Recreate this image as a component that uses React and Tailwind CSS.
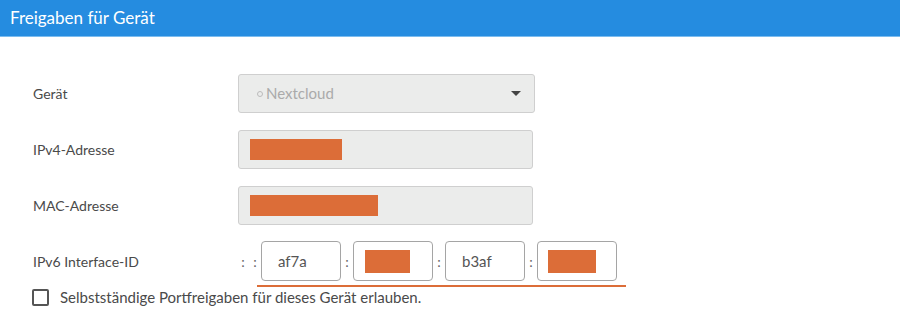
import React from "react";

const font = { fontFamily: "Lato, 'Open Sans', sans-serif" };

const Label = ({ children }) => (
  <div className="w-[238px] shrink-0 pl-[33px] text-[14px] text-[#4a4a4a]">{children}</div>
);

const Redacted = ({ w }) => <div className={`bg-[#dc6d38] h-[21px] ${w}`} />;

const Sep = () => <span className="text-[14px] text-[#666] w-[12px] text-center">:</span>;

const V6Box = ({ children, pad = "pl-[16px]" }) => (
  <div className={`w-[80px] h-[40px] border border-[#a5a5a5] rounded-[4px] bg-white flex items-center ${pad} text-[15px] text-[#555]`}>
    {children}
  </div>
);

export default function App() {
  return (
    <div className="w-[900px] h-[323px] bg-white overflow-hidden" style={font}>
      <div className="h-[37px] bg-[#258ce0] border-b border-[#7bbcef] flex items-center pl-[10px]">
        <h1 className="text-white text-[17px]">Freigaben für Gerät</h1>
      </div>

      <div className="pt-[37px] flex flex-col gap-[17px]">
        <div className="flex items-center">
          <Label>Gerät</Label>
          <div className="w-[297px] h-[39px] bg-[#ebeceb] border border-[#cfcfcf] rounded-[3px] flex items-center justify-between pl-[18px] pr-[13px]">
            <span className="flex items-center gap-[3px] text-[15px] text-[#aaa]">
              <span className="w-[6px] h-[6px] rounded-full border border-[#bbb]" />
              Nextcloud
            </span>
            <span className="w-0 h-0 border-l-[5px] border-r-[5px] border-t-[5px] border-l-transparent border-r-transparent border-t-[#444]" />
          </div>
        </div>

        <div className="flex items-center">
          <Label>IPv4-Adresse</Label>
          <div className="w-[295px] h-[39px] bg-[#ebeceb] border border-[#cfcfcf] rounded-[3px] flex items-center pl-[11px]">
            <Redacted w="w-[92px]" />
          </div>
        </div>

        <div className="flex items-center">
          <Label>MAC-Adresse</Label>
          <div className="w-[295px] h-[39px] bg-[#ebeceb] border border-[#cfcfcf] rounded-[3px] flex items-center pl-[11px]">
            <Redacted w="w-[128px]" />
          </div>
        </div>

        <div className="flex items-center -mt-[1px]">
          <Label>IPv6 Interface-ID</Label>
          <div className="flex items-center -ml-[1px]">
            <Sep />
            <Sep />
            <V6Box>af7a</V6Box>
            <Sep />
            <V6Box pad="pl-[11px]">
              <Redacted w="w-[45px] h-[23px]" />
            </V6Box>
            <Sep />
            <V6Box>b3af</V6Box>
            <Sep />
            <V6Box pad="pl-[10px]">
              <Redacted w="w-[48px] h-[23px]" />
            </V6Box>
          </div>
        </div>
      </div>

      <div className="ml-[257px] mt-[4px] w-[369px] h-[2px] bg-[#dc6d38]" />

      <label className="flex items-center gap-[11px] pl-[32px] -mt-[1px]">
        <span className="w-[17px] h-[17px] border-2 border-[#555] rounded-[2px] bg-white" />
        <span className="text-[15px] text-[#4a4a4a]">Selbstständige Portfreigaben für dieses Gerät erlauben.</span>
      </label>
    </div>
  );
}
